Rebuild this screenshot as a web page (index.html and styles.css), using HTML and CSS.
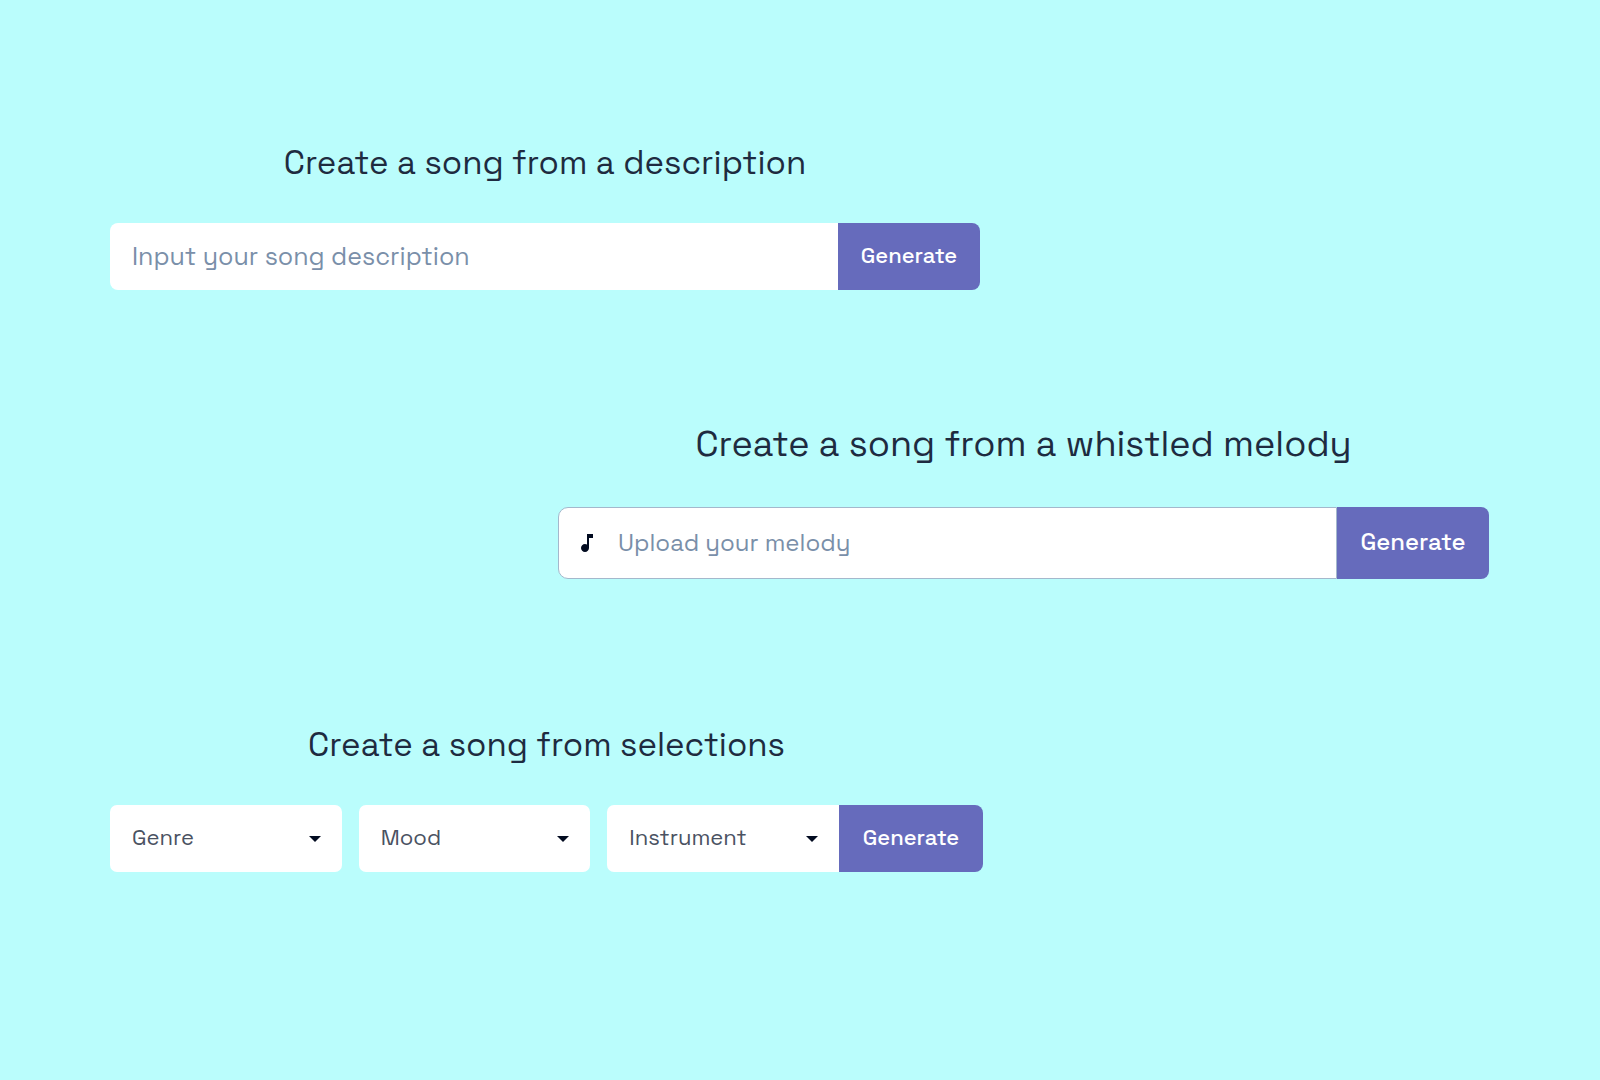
FILE: index.html
```html
<!DOCTYPE html>
<html lang="en">
<head>
<meta charset="utf-8">
<meta name="viewport" content="width=device-width, initial-scale=1">
<title>Create a song</title>
<link rel="stylesheet" href="styles.css">
</head>
<body>
<main class="page">
  <section class="creator">
    <h2 class="title"><label for="description">Create a song from a description</label></h2>
    <form class="bar">
      <input class="field field-solo" id="description" type="text" placeholder="Input your song description">
      <button class="generate" type="button">Generate</button>
    </form>
  </section>

  <section class="creator creator-melody">
    <h2 class="title"><label for="melody">Create a song from a whistled melody</label></h2>
    <form class="bar">
      <div class="upload">
        <svg class="note" viewBox="0 0 24 24" aria-hidden="true"><path d="M12 3v10.55c-.59-.34-1.27-.55-2-.55-2.21 0-4 1.79-4 4s1.79 4 4 4 4-1.79 4-4V7h4V3z"/></svg>
        <input class="field" id="melody" type="text" placeholder="Upload your melody">
      </div>
      <button class="generate" type="button">Generate</button>
    </form>
  </section>

  <section class="creator creator-selections">
    <h2 class="title">Create a song from selections</h2>
    <form class="bar">
      <div class="choices">
        <div class="choice">
          <select class="select" aria-label="Genre"><option>Genre</option></select>
          <svg class="caret" viewBox="0 0 12 6" aria-hidden="true"><path d="M0 0h12L6 6z"/></svg>
        </div>
        <div class="choice">
          <select class="select" aria-label="Mood"><option>Mood</option></select>
          <svg class="caret" viewBox="0 0 12 6" aria-hidden="true"><path d="M0 0h12L6 6z"/></svg>
        </div>
        <div class="choice">
          <select class="select" aria-label="Instrument"><option>Instrument</option></select>
          <svg class="caret" viewBox="0 0 12 6" aria-hidden="true"><path d="M0 0h12L6 6z"/></svg>
        </div>
      </div>
      <button class="generate" type="button">Generate</button>
    </form>
  </section>
</main>
</body>
</html>
```
FILE: styles.css
```css
* {
  box-sizing: border-box;
}

body {
  margin: 0;
  background: #bafdfc;
  color: #1e2b40;
  font-family: "Space Grotesk", Inter, "Liberation Sans", sans-serif;
}

.page {
  display: flex;
  flex-direction: column;
  padding: 139px 111px 139px 110px;
}

.creator {
  width: 100%;
  max-width: 870px;
}

.creator-melody {
  max-width: 931px;
  align-self: flex-end;
  margin-top: 130px;
}

.creator-selections {
  max-width: 873px;
  margin-top: 142px;
}

.title {
  margin: 0 0 36px;
  font-size: 33px;
  line-height: 48px;
  font-weight: 400;
  text-align: center;
}

.creator-melody .title {
  margin-bottom: 39px;
  font-size: 36px;
}

.bar {
  display: flex;
  min-height: 67px;
}

.creator-melody .bar {
  min-height: 72px;
}

.field {
  flex: 1;
  min-width: 0;
  padding: 0 0 2px;
  border: 0;
  outline: 0;
  background: #fff;
  color: #1e2b40;
  font: inherit;
  font-size: 24px;
}

.field::placeholder {
  color: #7a8fa9;
  opacity: 1;
}

.field-solo {
  padding: 0 22px 2px;
  border-radius: 8px 0 0 8px;
  font-size: 25px;
}

.upload {
  flex: 1;
  display: flex;
  align-items: center;
  gap: 19px;
  padding: 0 16px;
  border: 1px solid #a4b8cc;
  border-radius: 10px 0 0 10px;
  background: #fff;
}

.note {
  flex: none;
  width: 24px;
  height: 24px;
  fill: #020b20;
}

.generate {
  flex: none;
  min-width: 142px;
  padding: 0 22px 3px;
  border: 0;
  border-radius: 0 8px 8px 0;
  background: #666bbc;
  color: #fff;
  font: inherit;
  font-size: 22px;
  font-weight: 500;
}

.creator-melody .generate {
  min-width: 152px;
  font-size: 24px;
}

.creator-selections .generate {
  min-width: 144px;
}

.choices {
  flex: 1;
  display: grid;
  grid-template-columns: repeat(3, 1fr);
  gap: 17px;
}

.choice {
  position: relative;
  display: flex;
}

.select {
  appearance: none;
  flex: 1;
  min-width: 0;
  padding: 0 44px 3px 22px;
  border: 0;
  border-radius: 7px;
  background: #fff;
  color: #4a5262;
  font: inherit;
  font-size: 22px;
}

.choice:last-child .select {
  border-radius: 7px 0 0 7px;
}

.caret {
  position: absolute;
  top: 31px;
  right: 21px;
  width: 12px;
  height: 6px;
  fill: #020b20;
  pointer-events: none;
}
```
